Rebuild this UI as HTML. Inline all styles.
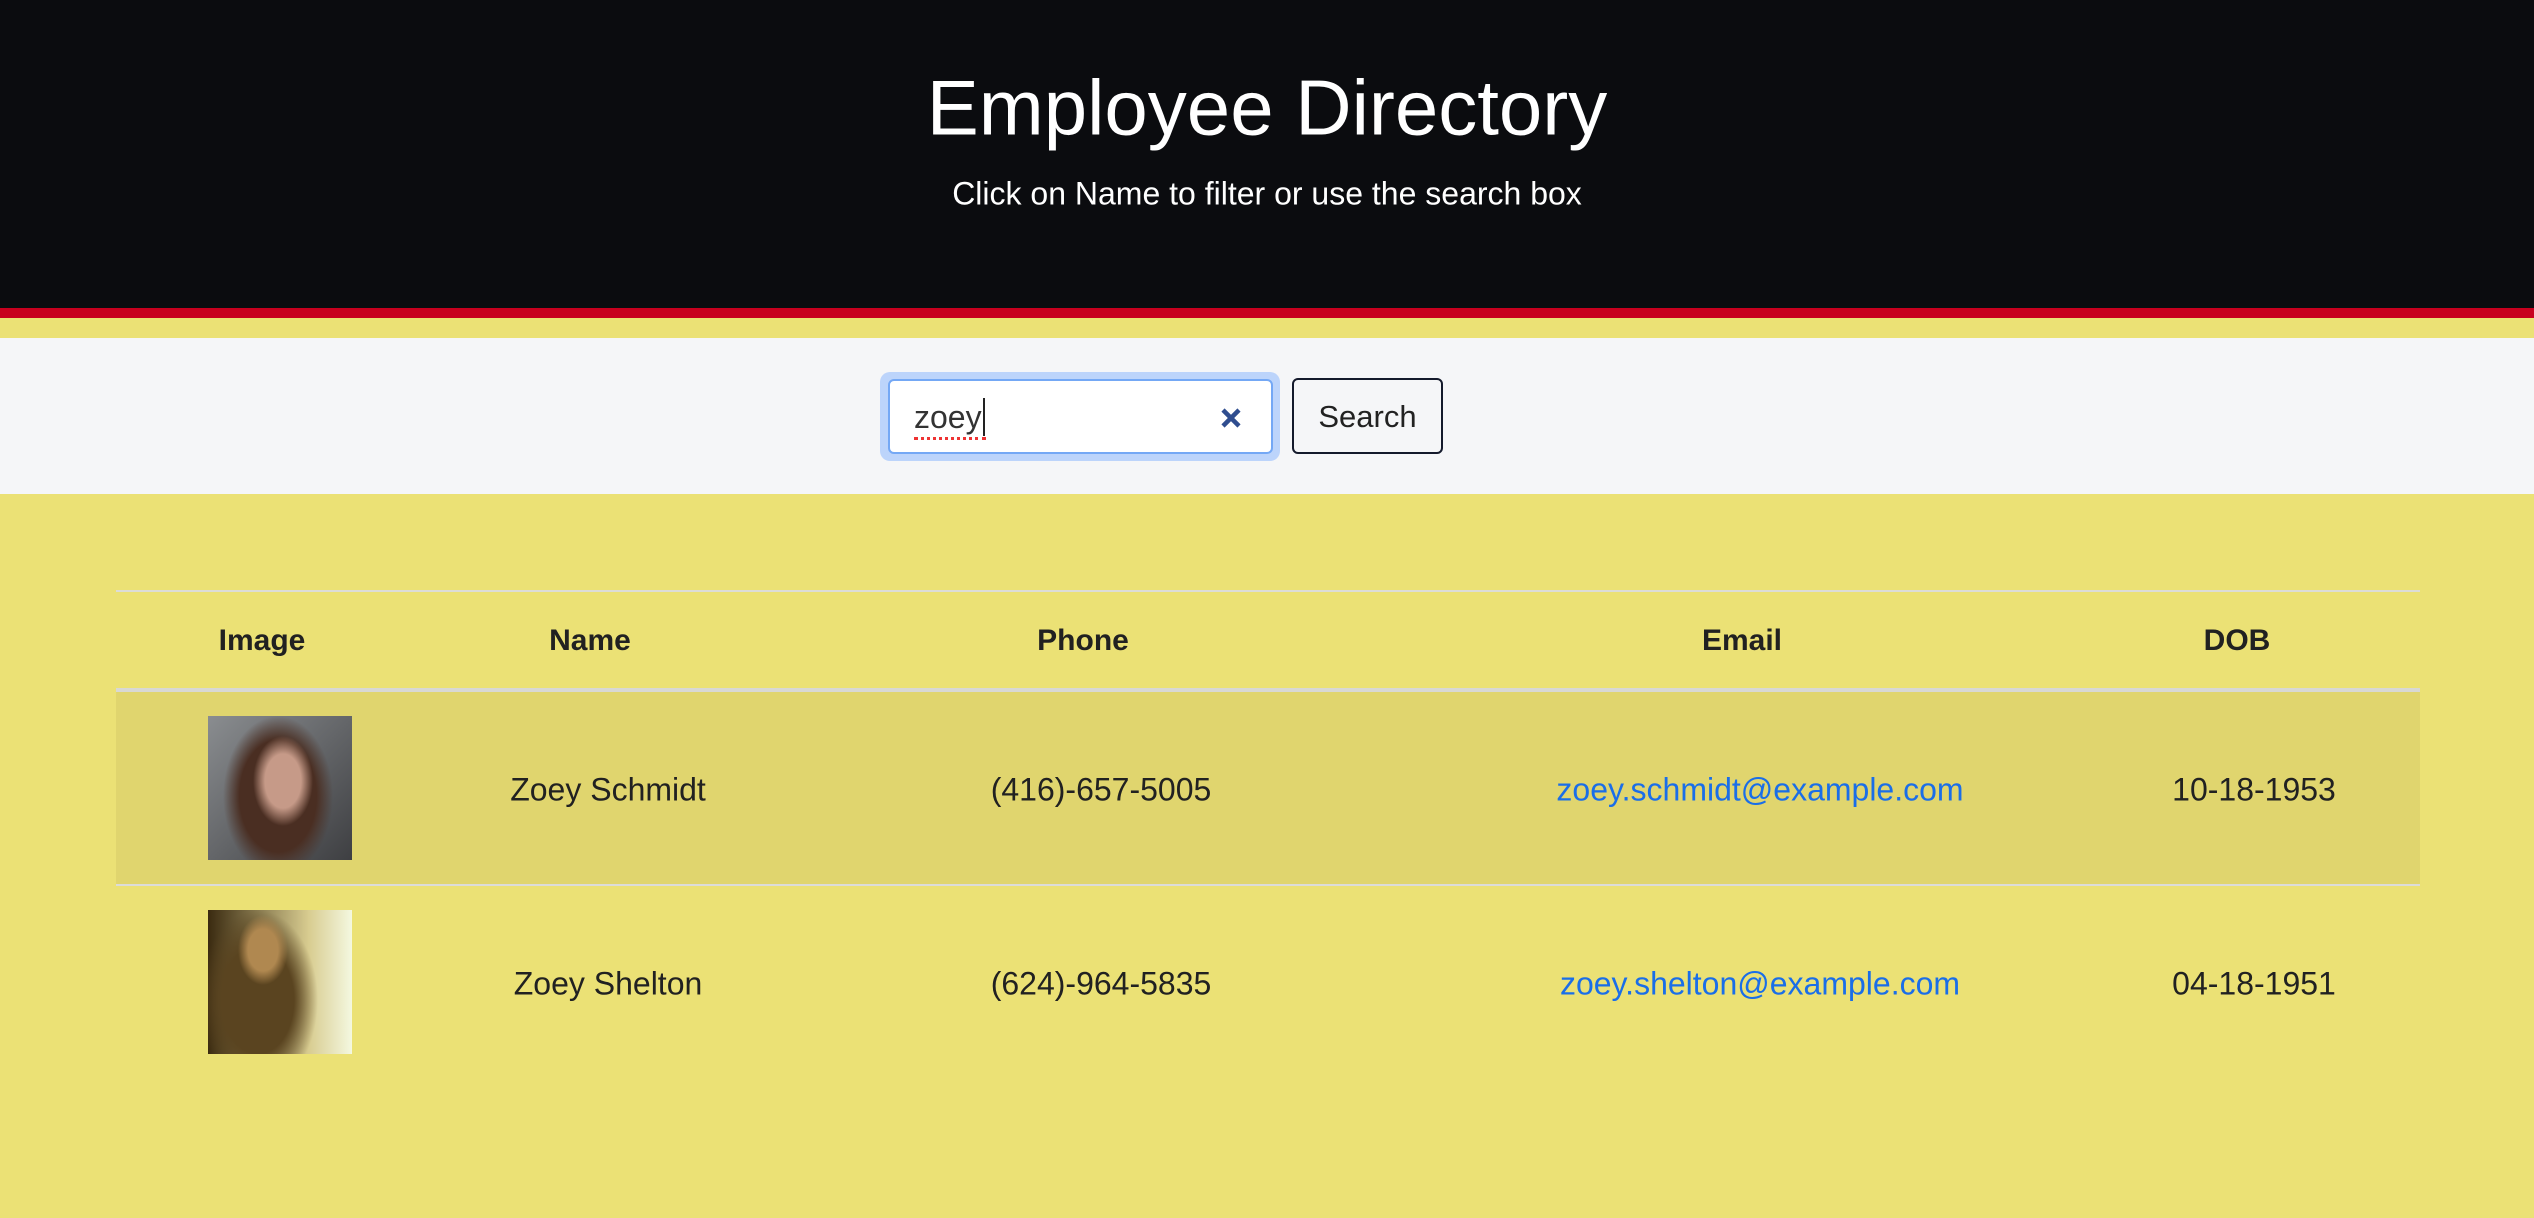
<!DOCTYPE html>
<html><head><meta charset="utf-8"><style>
*{margin:0;padding:0;box-sizing:border-box}
body{width:2534px;height:1218px;background:#ebe175;font-family:"Liberation Sans",sans-serif;position:relative;overflow:hidden;color:#212121}
.a{position:absolute}
.c{position:absolute;transform:translate(-50%,-50%);white-space:nowrap}
.d{font-size:32px}
</style></head><body>
<div class="a" style="left:0;top:0;width:2534px;height:308px;background:#0b0c0f"></div>
<div class="a" style="left:0;top:308px;width:2534px;height:10px;background:#c8001e"></div>
<div class="c" style="left:1267px;top:108px;font-size:78px;color:#fff">Employee Directory</div>
<div class="c" style="left:1267px;top:194px;font-size:32px;color:#fff">Click on Name to filter or use the search box</div>
<div class="a" style="left:0;top:338px;width:2534px;height:156px;background:#f5f6f8"></div>
<div class="a" style="left:880px;top:372px;width:400px;height:89px;border-radius:10px;background:#bcd4fb"></div>
<div class="a" style="left:888px;top:379px;width:385px;height:75px;border-radius:6px;background:#fff;border:2px solid #74a8f5"></div>
<div class="a" style="left:914px;top:398px;font-size:32px;color:#333">zoey<span style="display:inline-block;width:2px;height:38px;background:#222;vertical-align:-8px;margin-left:1px"></span></div>
<div class="a" style="left:914px;top:437px;width:72px;border-bottom:3px dotted #e33"></div>
<svg class="a" style="left:1220px;top:407px" width="22" height="22" viewBox="0 0 22 22"><path d="M3 3L19 19M19 3L3 19" stroke="#2f4d8f" stroke-width="4.5"/></svg>
<div class="a" style="left:1292px;top:378px;width:151px;height:76px;border:2px solid #141a2c;border-radius:6px;background:#f5f6f8;font-size:31px;line-height:74px;text-align:center;color:#222">Search</div>
<div class="a" style="left:116px;top:590px;width:2304px;height:2px;background:#dcdcd8"></div>
<div class="c" style="left:262px;top:641px;font-size:30px;font-weight:bold">Image</div>
<div class="c" style="left:590px;top:641px;font-size:30px;font-weight:bold">Name</div>
<div class="c" style="left:1083px;top:641px;font-size:30px;font-weight:bold">Phone</div>
<div class="c" style="left:1742px;top:641px;font-size:30px;font-weight:bold">Email</div>
<div class="c" style="left:2237px;top:641px;font-size:30px;font-weight:bold">DOB</div>
<div class="a" style="left:116px;top:688px;width:2304px;height:4px;background:#d8d8d4"></div>
<div class="a" style="left:116px;top:692px;width:2304px;height:192px;background:#e0d56e"></div>
<div class="a" style="left:116px;top:884px;width:2304px;height:2px;background:#dcdcd8"></div>
<div class="a" style="left:208px;top:716px;width:144px;height:144px;background:radial-gradient(ellipse 30px 45px at 75px 65px,#c69a88 60%,transparent 100%),radial-gradient(ellipse 55px 80px at 70px 80px,#4a2e22 70%,transparent 100%),linear-gradient(135deg,#8a8d90,#3e3f42)"></div>
<div class="a" style="left:208px;top:910px;width:144px;height:144px;background:radial-gradient(ellipse 25px 35px at 55px 40px,#b08850 60%,transparent 100%),radial-gradient(ellipse 60px 90px at 50px 90px,#5a4420 60%,transparent 100%),linear-gradient(90deg,#3a2a10,#d8cc90 70%,#f4f8e0)"></div>
<div class="c d" style="left:608px;top:790px">Zoey Schmidt</div>
<div class="c d" style="left:1101px;top:790px">(416)-657-5005</div>
<div class="c d" style="left:1760px;top:790px;color:#1a6ee8">zoey.schmidt@example.com</div>
<div class="c d" style="left:2254px;top:790px">10-18-1953</div>
<div class="c d" style="left:608px;top:984px">Zoey Shelton</div>
<div class="c d" style="left:1101px;top:984px">(624)-964-5835</div>
<div class="c d" style="left:1760px;top:984px;color:#1a6ee8">zoey.shelton@example.com</div>
<div class="c d" style="left:2254px;top:984px">04-18-1951</div>
</body></html>
